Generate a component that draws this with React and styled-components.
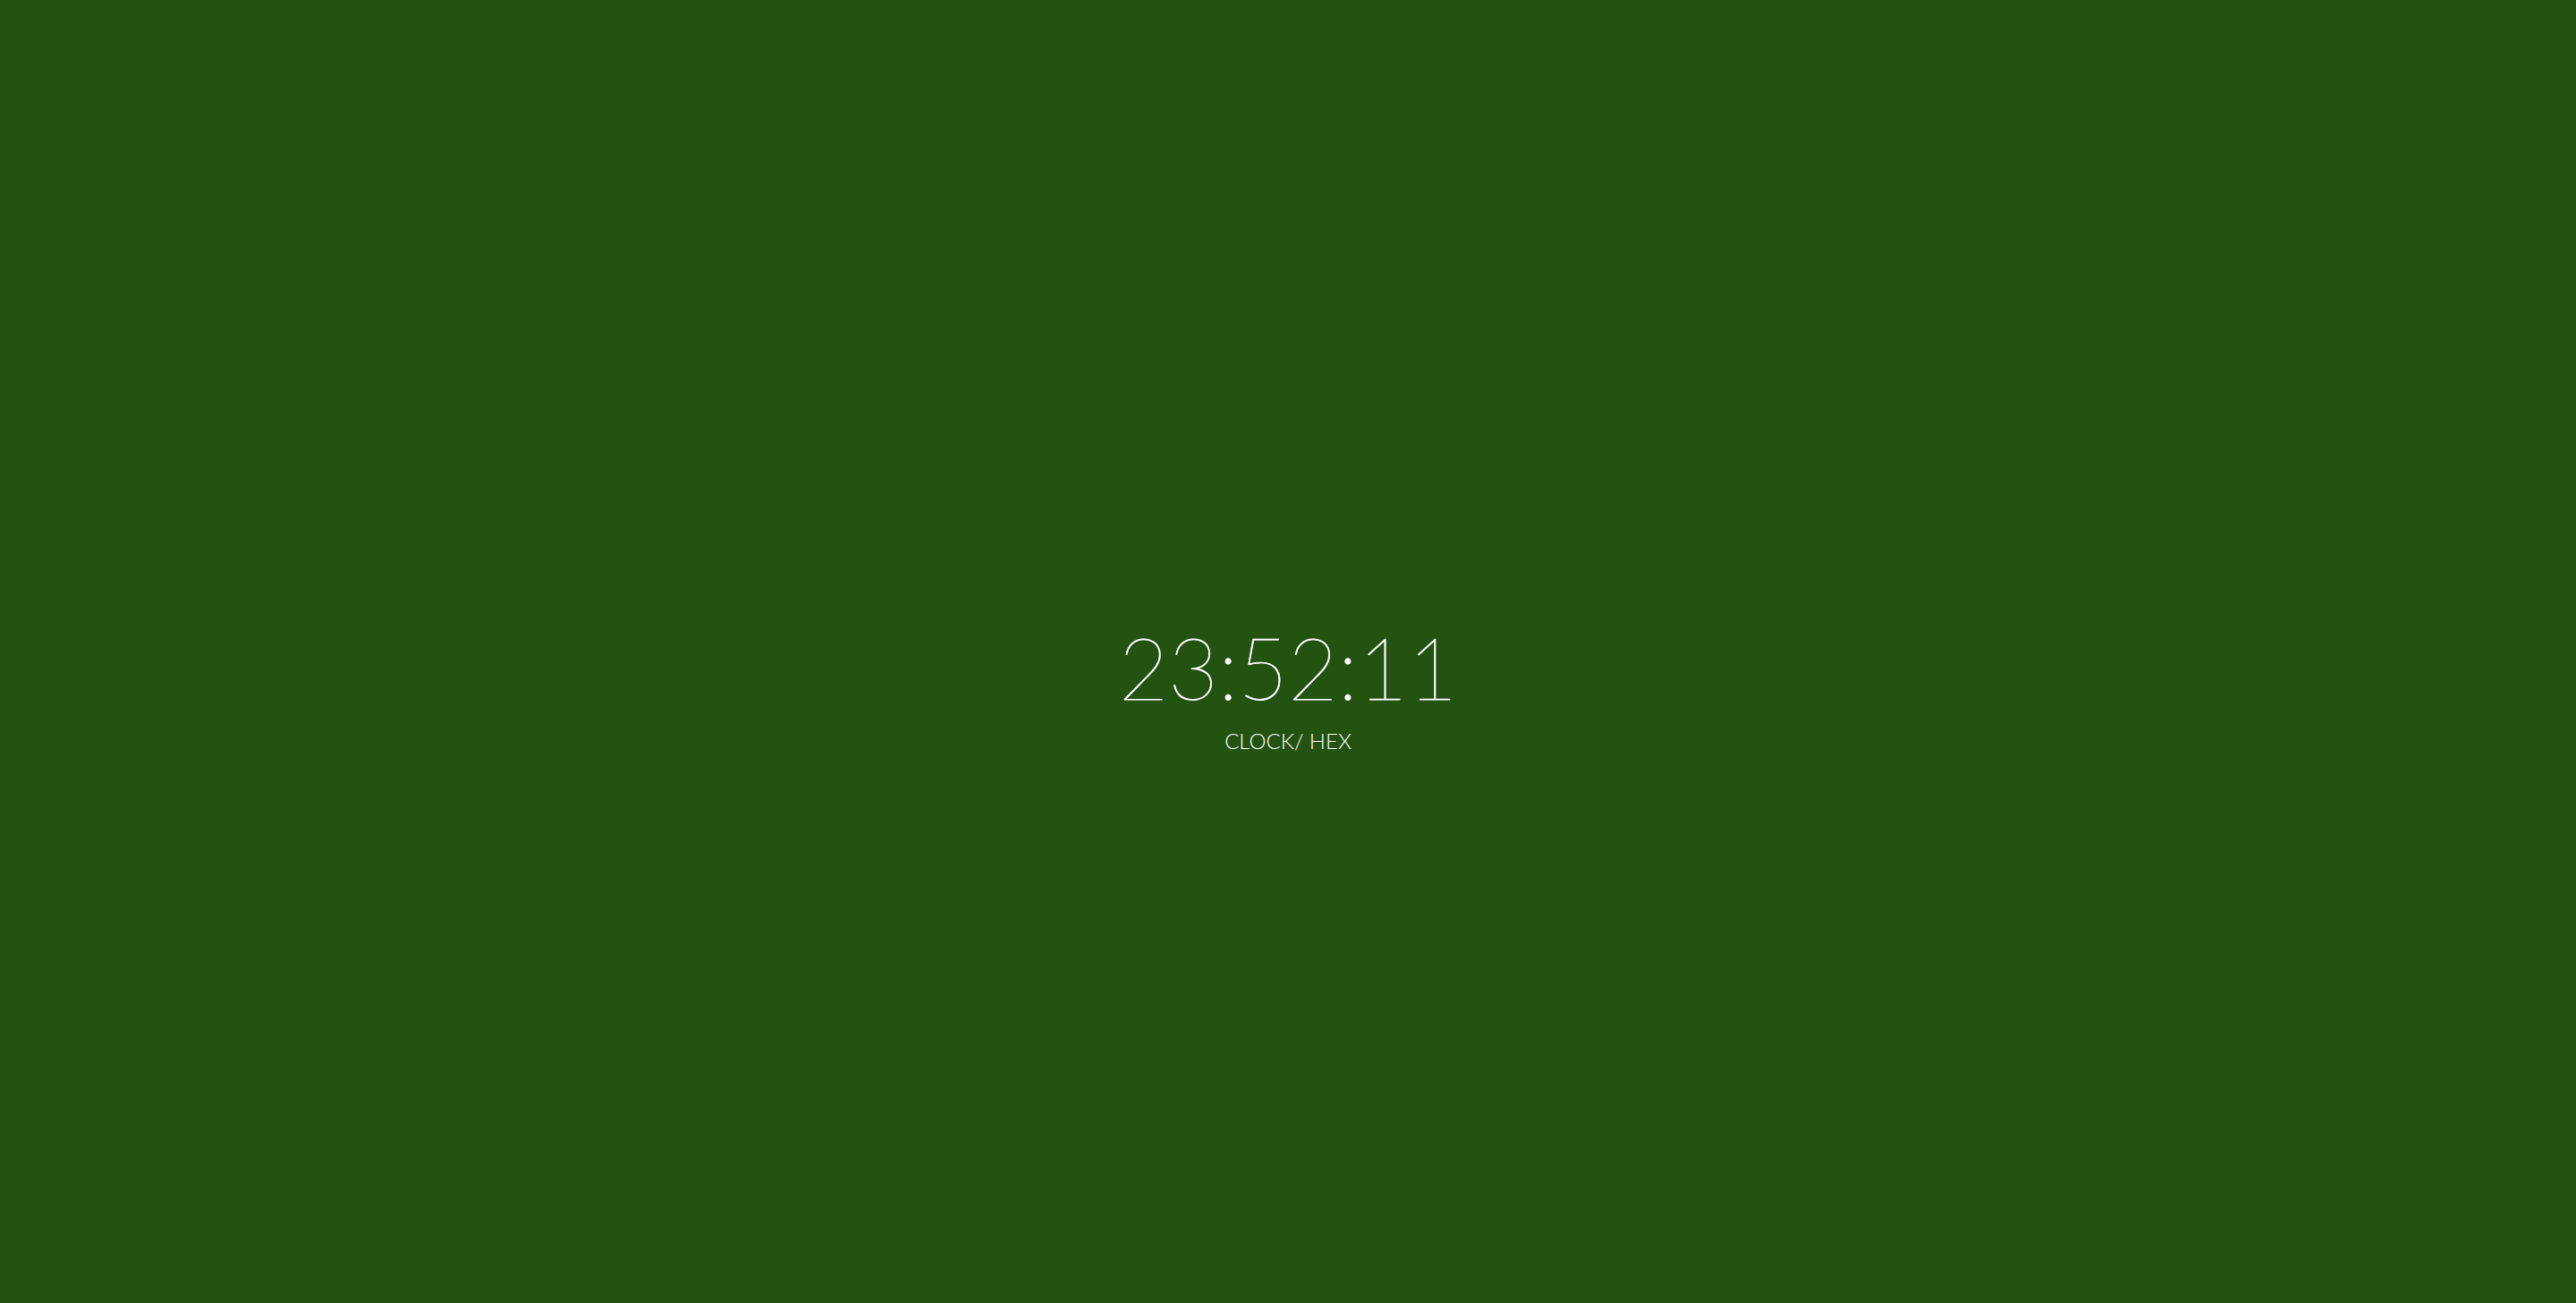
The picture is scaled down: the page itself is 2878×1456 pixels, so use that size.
import React from "react";
import styled, { createGlobalStyle } from "styled-components";

const Global = createGlobalStyle`
  html, body { margin: 0; padding: 0; height: 100%; }
  body { background: #235211; font-family: Lato, "Open Sans", sans-serif; }
  #root { height: 100%; }
`;

const Screen = styled.main`
  height: 100vh;
  width: 100%;
  background: #235211;
  display: flex;
  align-items: center;
  justify-content: center;
  padding-top: 80px;
  box-sizing: border-box;
`;

const Stack = styled.div`
  display: flex;
  flex-direction: column;
  align-items: center;
  color: #ffffff;
`;

const Time = styled.div`
  font-family: Lato, sans-serif;
  font-weight: 100;
  font-size: 96px;
  line-height: 1;
  letter-spacing: 0;
  -webkit-text-stroke: 0.8px #ffffff;
`;

const Label = styled.div`
  font-family: Lato, sans-serif;
  font-weight: 300;
  font-size: 24px;
  line-height: 1;
  margin-top: 23px;
  color: #ffffff;
`;

export default function App() {
  return (
    <>
      <Global />
      <Screen>
        <Stack>
          <Time>23:52:11</Time>
          <Label>CLOCK/ HEX</Label>
        </Stack>
      </Screen>
    </>
  );
}
